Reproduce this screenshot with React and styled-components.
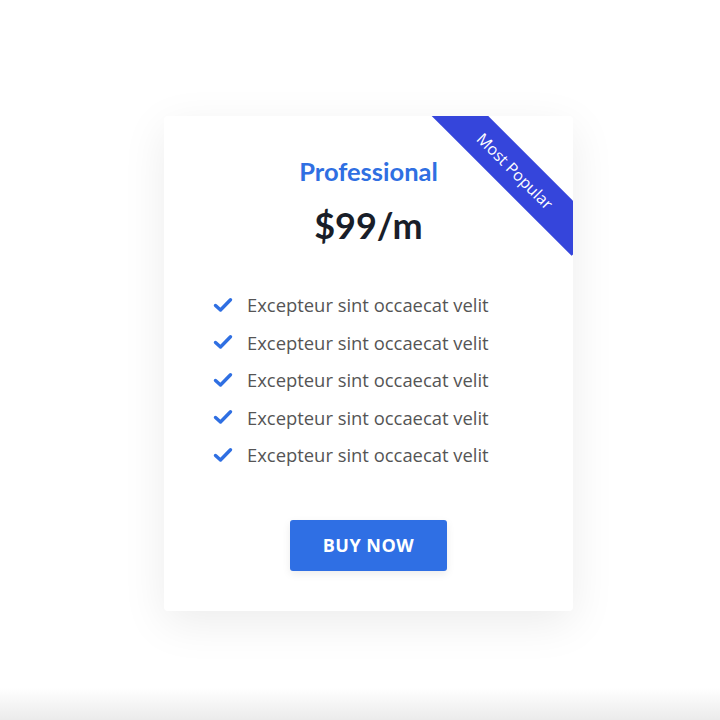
import React from 'react';
import styled, { createGlobalStyle } from 'styled-components';

const features = [
  'Excepteur sint occaecat velit',
  'Excepteur sint occaecat velit',
  'Excepteur sint occaecat velit',
  'Excepteur sint occaecat velit',
  'Excepteur sint occaecat velit',
];

const App = () => {
  return (
    <>
      <GlobalStyle />
      <Page>
        <Card>
          <Ribbon>Most Popular</Ribbon>
          <Title>Professional</Title>
          <Price>$99/m</Price>
          <List>
            {features.map((item, index) => (
              <Item key={index}>
                <Check viewBox='0 0 20 16'>
                  <path
                    d='M2.5 8.5 L7.5 13 L17.5 2.8'
                    fill='none'
                    stroke='#2f6fe2'
                    strokeWidth='3.4'
                    strokeLinecap='round'
                    strokeLinejoin='round'
                  />
                </Check>
                {item}
              </Item>
            ))}
          </List>
          <Button>BUY NOW</Button>
        </Card>
        <Fade />
      </Page>
    </>
  );
};

export default App;

const GlobalStyle = createGlobalStyle`
  body {
    margin: 0;
    background: #fff;
    font-family: 'Open Sans', sans-serif;
  }
`;

const Page = styled.div`
  height: 720px;
  display: flex;
  flex-direction: column;
  align-items: center;
  padding-top: 116px;
  box-sizing: border-box;
  overflow: hidden;
`;

const Card = styled.div`
  position: relative;
  width: 409px;
  margin-left: 17px;
  box-sizing: border-box;
  background: #fff;
  border-radius: 4px;
  box-shadow: 0 12px 45px rgba(0, 0, 0, 0.08);
  overflow: hidden;
  padding: 41px 0 40px;
  display: flex;
  flex-direction: column;
  align-items: center;
`;

const Ribbon = styled.div`
  position: absolute;
  left: 251px;
  top: 35px;
  width: 200px;
  height: 40px;
  background: #3545db;
  color: #fff;
  font-size: 16px;
  line-height: 40px;
  text-align: center;
  transform: rotate(45deg);
`;

const Title = styled.h2`
  margin: 0;
  font-family: Lato, sans-serif;
  font-weight: 700;
  font-size: 25.5px;
  line-height: 29px;
  color: #2f6fe2;
`;

const Price = styled.div`
  margin-top: 17px;
  font-family: Lato, sans-serif;
  font-weight: 700;
  font-size: 36px;
  line-height: 44px;
  color: #191e29;
`;

const List = styled.ul`
  list-style: none;
  margin: 39px 0 0;
  padding: 0 0 0 49px;
  align-self: stretch;
`;

const Item = styled.li`
  display: flex;
  align-items: center;
  height: 37.5px;
  font-size: 18.4px;
  color: #555;
`;

const Check = styled.svg`
  width: 20px;
  height: 16px;
  margin-right: 14px;
`;

const Button = styled.button`
  margin-top: 46px;
  width: 157px;
  height: 51px;
  border: none;
  border-radius: 3px;
  background: #2f6fe4;
  color: #fff;
  font-family: 'Open Sans', sans-serif;
  font-weight: 700;
  font-size: 18px;
  letter-spacing: 0.5px;
  box-shadow: 0 3px 8px rgba(0, 0, 0, 0.08);
  cursor: pointer;
`;

const Fade = styled.div`
  margin-top: auto;
  width: 100%;
  height: 32px;
  background: linear-gradient(to bottom, rgba(235, 235, 235, 0), #ebebeb);
`;
